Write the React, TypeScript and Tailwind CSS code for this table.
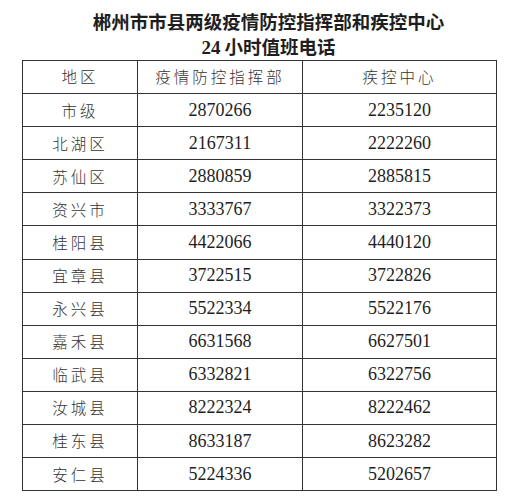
import React from 'react';

const ROWS: [string, string, string][] = [
  ['市级', '2870266', '2235120'],
  ['北湖区', '2167311', '2222260'],
  ['苏仙区', '2880859', '2885815'],
  ['资兴市', '3333767', '3322373'],
  ['桂阳县', '4422066', '4440120'],
  ['宜章县', '3722515', '3722826'],
  ['永兴县', '5522334', '5522176'],
  ['嘉禾县', '6631568', '6627501'],
  ['临武县', '6332821', '6322756'],
  ['汝城县', '8222324', '8222462'],
  ['桂东县', '8633187', '8623282'],
  ['安仁县', '5224336', '5202657'],
];

const cjk = "font-['Noto_Sans_CJK_SC',sans-serif]";
const num = "font-['Liberation_Serif',serif]";

export default function App() {
  return (
    <div className="w-[507px] h-[500px] bg-white text-[#1e1e1e] overflow-hidden">
      {/* Title */}
      <div className={`pt-[9px] pl-[30px] text-center font-bold text-[18.5px] leading-[25px] ${cjk}`}>
        <div>郴州市市县两级疫情防控指挥部和疾控中心</div>
        <div>
          <span className={`${num} text-[19px]`}>24</span> 小时值班电话
        </div>
      </div>

      {/* Table */}
      <table className="ml-[22px] w-[474px] border-collapse table-fixed">
        <colgroup>
          <col className="w-[115px]" />
          <col className="w-[165px]" />
          <col className="w-[194px]" />
        </colgroup>
        <thead>
          <tr className="h-[33.1px]">
            {['地区', '疫情防控指挥部', '疾控中心'].map((h) => (
              <th
                key={h}
                className={`border-[1.5px] border-[#333] p-0 text-center font-light text-[15.5px] tracking-[3px] text-[#333] ${cjk}`}
              >
                {h}
              </th>
            ))}
          </tr>
        </thead>
        <tbody>
          {ROWS.map(([area, hq, cdc]) => (
            <tr key={area} className="h-[33.1px]">
              <td className={`border-[1.5px] border-[#333] p-0 text-center font-light text-[15.5px] tracking-[3px] text-[#333] ${cjk}`}>
                {area}
              </td>
              <td className={`border-[1.5px] border-[#333] p-0 text-center text-[18px] ${num}`}>{hq}</td>
              <td className={`border-[1.5px] border-[#333] p-0 text-center text-[18px] ${num}`}>{cdc}</td>
            </tr>
          ))}
        </tbody>
      </table>
    </div>
  );
}
